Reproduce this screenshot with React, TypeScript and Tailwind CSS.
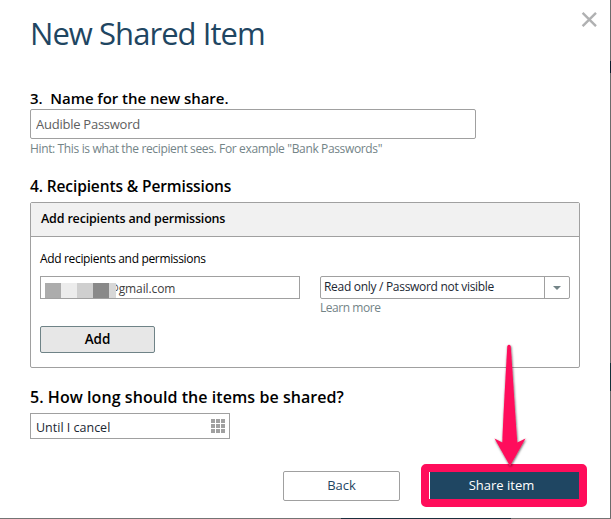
import { useState } from 'react'

const maskBlocks = [
  { color: 'bg-[#acacac]', width: 'w-4' },
  { color: 'bg-[#ececec]', width: 'w-4' },
  { color: 'bg-[#cfcfcf]', width: 'w-4' },
  { color: 'bg-[#898989]', width: 'w-4' },
  { color: 'bg-[#d7d7d7]', width: 'w-[7px]' }
]

function CloseIcon() {
  return (
    <svg width="16" height="16" viewBox="0 0 16 16" fill="none" stroke="#b0b1b2" strokeWidth="2.4">
      <path d="M1.6 1.8 15 15.2M15 1.8 1.6 15.2" />
    </svg>
  )
}

function GridIcon() {
  return (
    <div className="grid grid-cols-3 gap-px">
      {Array.from({ length: 9 }).map((_, i) => (
        <span key={i} className="size-1 bg-[#a0a0a0]" />
      ))}
    </div>
  )
}

// Callout arrow and frame around the submit button
function Callout() {
  return (
    <svg
      className="absolute left-[410px] top-[335px] pointer-events-none"
      width="190"
      height="184"
      viewBox="410 335 190 184"
    >
      <defs>
        <filter id="arrowShadow" x="-20%" y="-20%" width="140%" height="140%">
          <feDropShadow dx="0.5" dy="1" stdDeviation="1.1" floodColor="#000" floodOpacity="0.65" />
        </filter>
      </defs>
      <rect x="425" y="468" width="158" height="35" rx="1" fill="none" stroke="#ff0d5b" strokeWidth="8" strokeLinejoin="round" />
      <path
        filter="url(#arrowShadow)"
        fill="#ff0d5b"
        d="M507.3 346Q509 343.5 510.7 346C513 378 515 412 517.3 442.5L525.5 438.5 510 466 494.5 438.5 502.3 442.5C503.5 412 505.5 378 507.3 346Z"
      />
    </svg>
  )
}

export default function App() {
  const [name, setName] = useState('Audible Password')

  return (
    <div className="relative w-[611px] h-[519px] overflow-hidden bg-white pl-[30px] font-['Open_Sans','Noto_Sans',sans-serif] text-black">
      {/* Title bar */}
      <header className="flex justify-between pt-[11px] pr-[14px]">
        <h1 className="h-11 text-[31px] leading-[44px] tracking-[-0.95px] whitespace-nowrap text-[#1f4662]">New Shared Item</h1>
        <button className="h-4" aria-label="Close">
          <CloseIcon />
        </button>
      </header>

      {/* Share name */}
      <section className="mt-[33px]">
        <h2 className="h-5 text-[15px] leading-5 font-semibold tracking-[-0.05px] whitespace-pre">3.  Name for the new share.</h2>
        <input
          value={name}
          onChange={e => setName(e.target.value)}
          className="mt-px block w-[446px] h-[30px] rounded-[2px] border border-[#a0a0a0] px-[5px] text-[13px] tracking-[-0.25px] text-[#606060] outline-none"
        />
        <p className="h-5 text-[12px] leading-5 tracking-[-0.36px] whitespace-nowrap text-[#738487]">
          Hint: This is what the recipient sees. For example "Bank Passwords"
        </p>
      </section>

      {/* Recipients */}
      <section className="mt-[17px]">
        <h2 className="h-5 text-[15.5px] leading-5 font-semibold tracking-[-0.12px] whitespace-nowrap">4. Recipients &amp; Permissions</h2>
        <div className="mt-[6px] w-[550px] h-[166px] rounded-[2px] border border-[#a0a0a0]">
          <h3 className="flex h-[34px] items-center border-b border-[#a0a0a0] bg-[#f1f1f1] pb-px pl-[10px] text-[12.5px] font-semibold tracking-[-0.17px]">
            Add recipients and permissions
          </h3>
          <div className="pl-[9px] pt-3">
            <label className="block h-5 text-[12px] leading-5 tracking-[-0.34px]">Add recipients and permissions</label>
            <div className="mt-[7px] flex gap-5">
              <div className="relative w-[260px] h-[23px] border border-[#a0a0a0] pl-[67px]">
                <span className="block text-[12px] leading-[23px] tracking-[-0.1px] text-[#404040]">@gmail.com</span>
                <div className="absolute left-1 top-[6px] flex h-[15px]">
                  {maskBlocks.map((b, i) => (
                    <span key={i} className={`${b.color} ${b.width}`} />
                  ))}
                </div>
              </div>
              <div>
                <button className="flex w-[250px] h-[23px] rounded-[2px] border border-[#a0a0a0] text-left">
                  <span className="h-full flex-1 pl-[3px] text-[12px] leading-5 tracking-[-0.3px] whitespace-nowrap text-[#1b2733]">
                    Read only / Password not visible
                  </span>
                  <span className="flex h-full w-[25px] items-center justify-center border-l border-[#a0a0a0]">
                    <svg width="8" height="4" viewBox="0 0 8 4" fill="#738487">
                      <path d="M0 0h8L4 4z" />
                    </svg>
                  </span>
                </button>
                <a className="block h-[18px] text-[12px] leading-[18px] tracking-[-0.45px] text-[#738487]">Learn more</a>
              </div>
            </div>
            <button className="mt-[9px] flex w-[115px] h-[27px] items-center justify-center rounded-[2px] border border-[#6f8387] bg-[#e7e7e7] pb-px text-[13.5px] font-semibold">
              Add
            </button>
          </div>
        </div>
      </section>

      {/* Duration */}
      <section className="mt-[19px]">
        <h2 className="h-5 text-[16px] leading-5 font-semibold tracking-[0.06px] whitespace-nowrap">5. How long should the items be shared?</h2>
        <div className="mt-[6px] flex w-[200px] h-[26px] items-center justify-between border border-[#a0a0a0] pl-[5px] pr-1">
          <span className="pt-[3px] text-[12.5px] leading-5 text-[#1b2733]">Until I cancel</span>
          <GridIcon />
        </div>
      </section>

      {/* Actions */}
      <footer className="mt-8 flex pl-[253px]">
        <button className="w-[117px] h-[30px] rounded-[2px] border border-[#a0a0a0] pb-px text-[13px] text-[#1f4662]">Back</button>
        <button className="ml-[30px] mt-px w-[149px] h-[28px] bg-[#1f4662] pr-[6px] text-[13px] text-white">Share item</button>
      </footer>

      {/* Window edges */}
      <div className="absolute right-0 top-0 h-full w-px bg-[#6b6b6b]">
        <div className="mt-[61px] h-3 bg-[#0b1c2c]" />
        <div className="mt-[290px] h-7 bg-[#123038]" />
      </div>
      <div className="absolute bottom-0 left-0 flex h-px w-full bg-[#747474]">
        <div className="ml-[341px] w-[170px] bg-[#1b2f3d]" />
      </div>

      <Callout />
    </div>
  )
}
